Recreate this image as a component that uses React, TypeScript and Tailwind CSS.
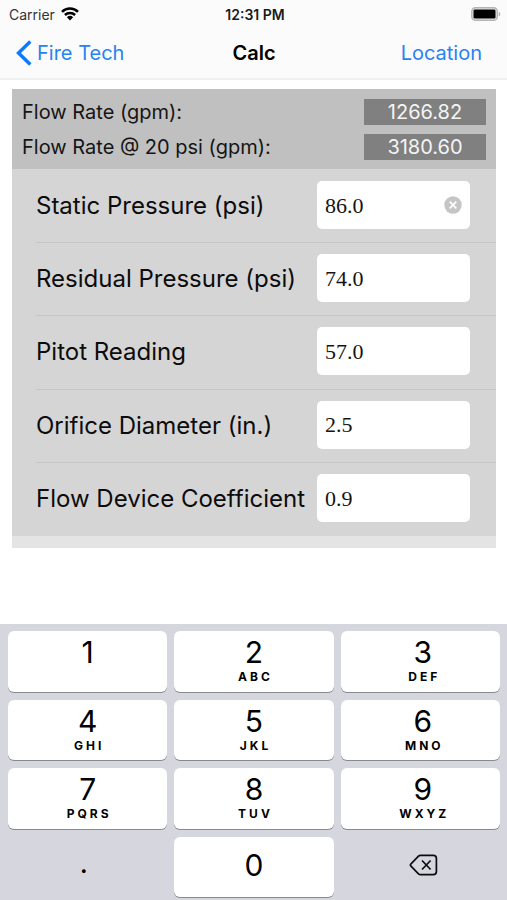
import React, { useState } from "react";

interface Field {
  id: string;
  label: string;
}

interface KeyDef {
  digit: string;
  letters?: string;
}

const fields: Field[] = [
  { id: "static", label: "Static Pressure (psi)" },
  { id: "residual", label: "Residual Pressure (psi)" },
  { id: "pitot", label: "Pitot Reading" },
  { id: "orifice", label: "Orifice Diameter (in.)" },
  { id: "coefficient", label: "Flow Device Coefficient" },
];

const results = [
  { label: "Flow Rate (gpm):", value: "1266.82" },
  { label: "Flow Rate @ 20 psi (gpm):", value: "3180.60" },
];

const keys: KeyDef[] = [
  { digit: "1" },
  { digit: "2", letters: "ABC" },
  { digit: "3", letters: "DEF" },
  { digit: "4", letters: "GHI" },
  { digit: "5", letters: "JKL" },
  { digit: "6", letters: "MNO" },
  { digit: "7", letters: "PQRS" },
  { digit: "8", letters: "TUV" },
  { digit: "9", letters: "WXYZ" },
];

const WifiIcon = () => (
  <svg width="18" height="14" viewBox="0 0 18 14" aria-hidden="true">
    <g fill="none" stroke="#000" strokeWidth="2.5">
      <path d="M1 4.8a11.4 11.4 0 0 1 16 0" />
      <path d="M3.9 8a7.3 7.3 0 0 1 10.2 0" />
    </g>
    <path d="M9 13.4 5.9 10.2a4.5 4.5 0 0 1 6.2 0Z" />
  </svg>
);

const BatteryIcon = () => (
  <svg width="31" height="14" viewBox="0 0 31 14" aria-hidden="true">
    <rect x="1.8" y="0.7" width="25.5" height="12.6" rx="3.6" fill="#e8e8e8" stroke="#b4b4b4" strokeWidth="1.4" />
    <rect x="3.5" y="2.4" width="22" height="9.2" rx="1.4" />
    <path d="M28.7 4.7v4.6c1-.4 1.7-1.3 1.7-2.3s-.7-1.9-1.7-2.3Z" fill="#b4b4b4" />
  </svg>
);

const BackIcon = () => (
  <svg width="16" height="26" viewBox="0 0 16 26" aria-hidden="true">
    <path d="M14.3 1.5 2.5 13l11.8 11.5" fill="none" stroke="#0a7aff" strokeWidth="3.4" />
  </svg>
);

const ClearIcon = () => (
  <svg width="18" height="18" viewBox="0 0 18 18" aria-hidden="true">
    <circle cx="9" cy="9" r="8.7" fill="#c5c5c5" />
    <path d="m5.7 5.7 6.6 6.6m0-6.6-6.6 6.6" stroke="#fff" strokeWidth="1.7" />
  </svg>
);

const DeleteIcon = () => (
  <svg width="29" height="22" viewBox="0 0 29 22" fill="none" stroke="#0c0c0e" strokeWidth="1.7" aria-hidden="true">
    <path d="M11.5 1.3h12.7a3.2 3.2 0 0 1 3.2 3.2v13a3.2 3.2 0 0 1-3.2 3.2H11.500c-.8 0-1.4-.3-2-.9L2 12.2a1.7 1.7 0 0 1 0-2.4l7.500-7.600c.6-.6 1.200-.9 2-.9Z" />
    <path d="m13 6.5 8.6 9m0-9-8.6 9" />
  </svg>
);

const App: React.FC = () => {
  const [values, setValues] = useState<Record<string, string>>({
    static: "86.0",
    residual: "74.0",
    pitot: "57.0",
    orifice: "2.5",
    coefficient: "0.9",
  });
  const [activeId, setActiveId] = useState("static");

  const updateValue = (id: string, value: string) => {
    setValues((prev) => ({ ...prev, [id]: value }));
  };

  const pressKey = (char: string) => updateValue(activeId, values[activeId] + char);

  return (
    <div className="flex min-h-screen flex-col bg-white font-['Inter',sans-serif] text-black">
      <header className="border-b-2 border-[#f0f0f0] bg-[#fbfbfb]">
        <div className="grid h-7 grid-cols-3 items-center pr-[6px] pl-[9px] text-[14px]">
          <div className="flex items-center gap-[6px] text-[#333]">
            Carrier
            <WifiIcon />
          </div>
          <div className="text-center font-semibold text-[#1a1a1a]">12:31 PM</div>
          <div className="flex justify-end">
            <BatteryIcon />
          </div>
        </div>
        <nav className="grid h-[50px] grid-cols-3 items-center pr-[25px] pl-4 text-[20px]">
          <button type="button" className="flex items-center gap-[5px] text-[#2583f3]">
            <BackIcon />
            Fire Tech
          </button>
          <h1 className="pl-[10px] text-center font-semibold">Calc</h1>
          <button type="button" className="justify-self-end text-[#2583f3]">
            Location
          </button>
        </nav>
      </header>

      <main className="mt-[9px] mr-[11px] ml-3 bg-[#e4e4e4] pb-3">
        <dl className="flex flex-col gap-[9px] bg-[#c0c0c0] px-[10px] pt-[10px] pb-[9px] text-[20px] text-[#151515]">
          {results.map((result) => (
            <div key={result.label} className="flex h-[26px] items-center justify-between">
              <dt>{result.label}</dt>
              <dd className="w-[122px] bg-[#808080] text-center leading-[26px] text-[#f4f4f4]">
                {result.value}
              </dd>
            </div>
          ))}
        </dl>

        <form className="grid min-h-[367px] grid-rows-5 bg-[#d5d5d5] pt-px pl-6">
          {fields.map((field) => (
            <div
              key={field.id}
              className="flex items-center justify-between border-b border-[#c6c6c6] pr-[26px] pb-[2px] last:border-b-0"
            >
              <label htmlFor={field.id} className="pt-[2px] text-[24px] whitespace-nowrap text-[#0c0c0c]">
                {field.label}
              </label>
              <div className="flex h-12 w-[153px] items-center rounded-[5px] bg-white px-2">
                <input
                  id={field.id}
                  type="text"
                  inputMode="decimal"
                  value={values[field.id]}
                  onFocus={() => setActiveId(field.id)}
                  onChange={(e) => updateValue(field.id, e.target.value)}
                  className="w-full min-w-0 flex-1 bg-transparent font-['Liberation_Serif',serif] text-[22px] text-[#151515] outline-none"
                />
                {activeId === field.id && (
                  <button type="button" aria-label="Clear" onClick={() => updateValue(field.id, "")}>
                    <ClearIcon />
                  </button>
                )}
              </div>
            </div>
          ))}
        </form>
      </main>

      {/* Keypad */}
      <section className="mt-auto grid min-h-[276px] grid-cols-3 grid-rows-4 gap-x-[7px] gap-y-2 bg-[#d5d6de] pt-[7px] pr-[7px] pb-[3px] pl-2">
        {keys.map((key) => (
          <button
            key={key.digit}
            type="button"
            onClick={() => pressKey(key.digit)}
            className="flex flex-col items-center rounded-[6px] bg-white pt-[2px] shadow-[0_1px_0_#898a8d] nth-[3n]:pl-[5px]"
          >
            <span className="text-[30px] leading-[38px]">{key.digit}</span>
            {key.letters && (
              <span className="pl-[3px] text-[12px] leading-3 font-bold tracking-[3px]">{key.letters}</span>
            )}
          </button>
        ))}
        <button type="button" onClick={() => pressKey(".")} className="pr-2 pb-2 text-[28px]">
          .
        </button>
        <button
          type="button"
          onClick={() => pressKey("0")}
          className="rounded-[6px] bg-white pb-[3px] text-[30px] shadow-[0_1px_0_#898a8d]"
        >
          0
        </button>
        <button
          type="button"
          aria-label="Delete"
          onClick={() => updateValue(activeId, values[activeId].slice(0, -1))}
          className="flex items-center justify-center pb-[3px] pl-[6px]"
        >
          <DeleteIcon />
        </button>
      </section>
    </div>
  );
};

export default App;
